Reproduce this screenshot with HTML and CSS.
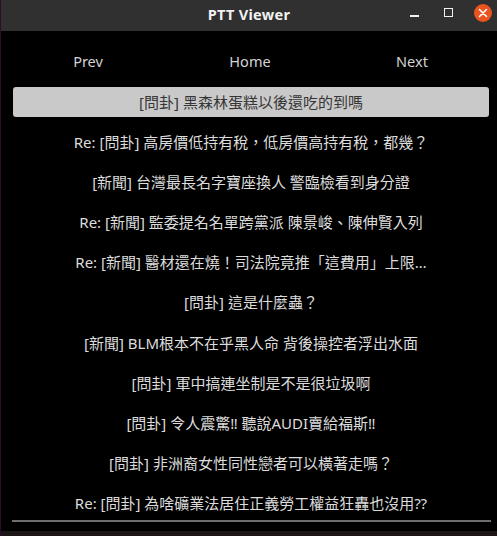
FILE: index.html
```html
<!DOCTYPE html>
<html>
<head>
<meta charset="utf-8">
<link rel="stylesheet" href="styles.css">
</head>
<body>
<div class="window">
  <div class="titlebar">
    <div class="title">PTT Viewer</div>
    <div class="controls">
      <span class="btn-min"></span>
      <span class="btn-max"></span>
      <span class="btn-close">
        <svg width="18" height="18" viewBox="0 0 18 18"><circle cx="9" cy="9" r="9" fill="#e95420"/><path d="M5.5 5.5 L12.5 12.5 M12.5 5.5 L5.5 12.5" stroke="#fff" stroke-width="1.6" stroke-linecap="round"/></svg>
      </span>
    </div>
  </div>
  <div class="content">
    <div class="nav">
      <div class="nav-item">Prev</div>
      <div class="nav-item">Home</div>
      <div class="nav-item">Next</div>
    </div>
    <ul class="list">
      <li class="item selected">[問卦] 黑森林蛋糕以後還吃的到嗎</li>
      <li class="item">Re: [問卦] 高房價低持有稅，低房價高持有稅，都幾？</li>
      <li class="item">[新聞] 台灣最長名字寶座換人 警臨檢看到身分證</li>
      <li class="item">Re: [新聞] 監委提名名單跨黨派 陳景峻、陳伸賢入列</li>
      <li class="item">Re: [新聞] 醫材還在燒！司法院竟推「這費用」上限…</li>
      <li class="item">[問卦] 這是什麼蟲？</li>
      <li class="item">[新聞] BLM根本不在乎黑人命 背後操控者浮出水面</li>
      <li class="item">[問卦] 軍中搞連坐制是不是很垃圾啊</li>
      <li class="item">[問卦] 令人震驚‼ 聽說AUDI賣給福斯‼</li>
      <li class="item">[問卦] 非洲裔女性同性戀者可以橫著走嗎？</li>
      <li class="item">Re: [問卦] 為啥礦業法居住正義勞工權益狂轟也沒用⁇</li>
    </ul>
    <div class="rule"></div>
  </div>
  <div class="desktop"></div>
</div>
</body>
</html>
```

FILE: styles.css
```css
* { box-sizing: border-box; }
html, body {
  margin: 0;
  padding: 0;
  background: #000;
  width: 497px;
  height: 536px;
  overflow: hidden;
}
body {
  font-family: "Noto Sans", "Noto Sans CJK TC", sans-serif;
  color: #dcdcdc;
}
.window {
  display: flex;
  flex-direction: column;
  height: 536px;
  border-left: 1px solid #2a0d28;
}
.titlebar {
  height: 31px;
  background: #303030;
  display: flex;
  align-items: center;
  justify-content: center;
  position: relative;
  flex: none;
  padding-bottom: 3px;
}
.title {
  color: #f2f2f2;
  font-weight: bold;
  font-size: 14.5px;
  letter-spacing: 0.3px;
}
.controls {
  position: absolute;
  right: 5px;
  top: 4px;
  height: 18px;
  display: flex;
  align-items: center;
}
.btn-min {
  width: 9px;
  height: 2px;
  background: #f2f2f2;
  margin-top: 6px;
  margin-right: 25px;
}
.btn-max {
  width: 9px;
  height: 9px;
  border: 1.5px solid #f2f2f2;
  margin-right: 21px;
  margin-bottom: 1px;
}
.btn-close {
  width: 18px;
  height: 18px;
  display: block;
}
.btn-close svg { display: block; }
.content {
  flex: 1;
  display: flex;
  flex-direction: column;
  background: #000;
}
.nav {
  display: grid;
  grid-template-columns: 1fr 1fr 1fr;
  padding: 0 4px 0 6px;
  height: 56px;
  align-items: center;
  font-size: 14.5px;
  color: #d4d4d4;
}
.nav-item {
  text-align: center;
  padding-top: 4px;
}
.list {
  list-style: none;
  margin: 0;
  padding: 0 8px 0 12px;
  display: flex;
  flex-direction: column;
  gap: 10.1px;
}
.item {
  height: 30px;
  line-height: 30px;
  text-align: center;
  font-size: 15px;
  white-space: nowrap;
  color: #dcdcdc;
}
.item.selected {
  background: #c9c9c9;
  color: #363636;
  border-radius: 3px;
}
.rule {
  height: 2px;
  background: #6e6e6e;
  margin: 2px 6px 0 11px;
}
.desktop {
  height: 5px;
  background: #1c1616;
  flex: none;
}
```
